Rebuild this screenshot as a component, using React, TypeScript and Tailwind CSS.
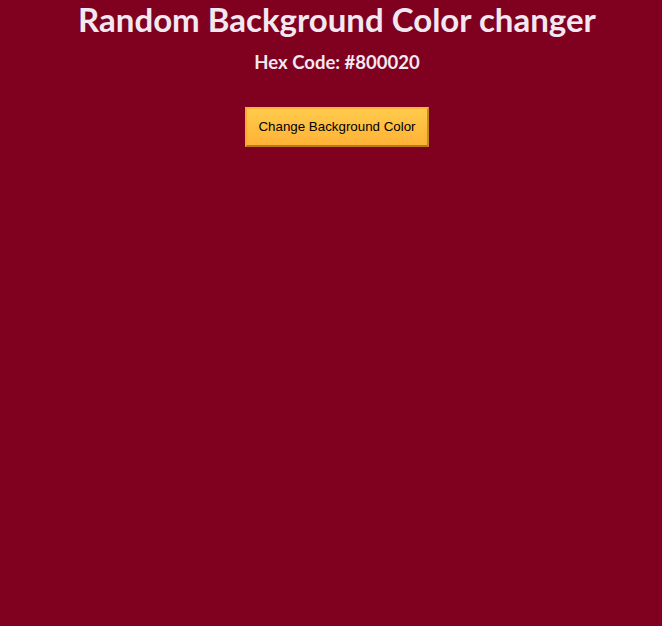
export default function App() {
  return (
    <div className="min-h-screen bg-[#800020] pl-[12px] text-center font-['Lato','Open_Sans',sans-serif] text-[#f2e8f2]">
      <h1 className="pt-[1px] text-[33px] font-bold leading-[36px]">Random Background Color changer</h1>
      <p className="mt-[14px] text-[18.5px] font-bold leading-[22px]">Hex Code: #800020</p>
      <button
        type="button"
        className="mt-[34px] h-[40px] border-2 border-t-[#ffb23a] border-l-[#ffa830] border-r-[#c98a22] border-b-[#b8791a] bg-gradient-to-b from-[#ffcb4c] to-[#ffb236] px-[11px] font-['Liberation_Sans',Arial,sans-serif] text-[13.33px] text-black"
      >
        Change Background Color
      </button>
    </div>
  );
}
